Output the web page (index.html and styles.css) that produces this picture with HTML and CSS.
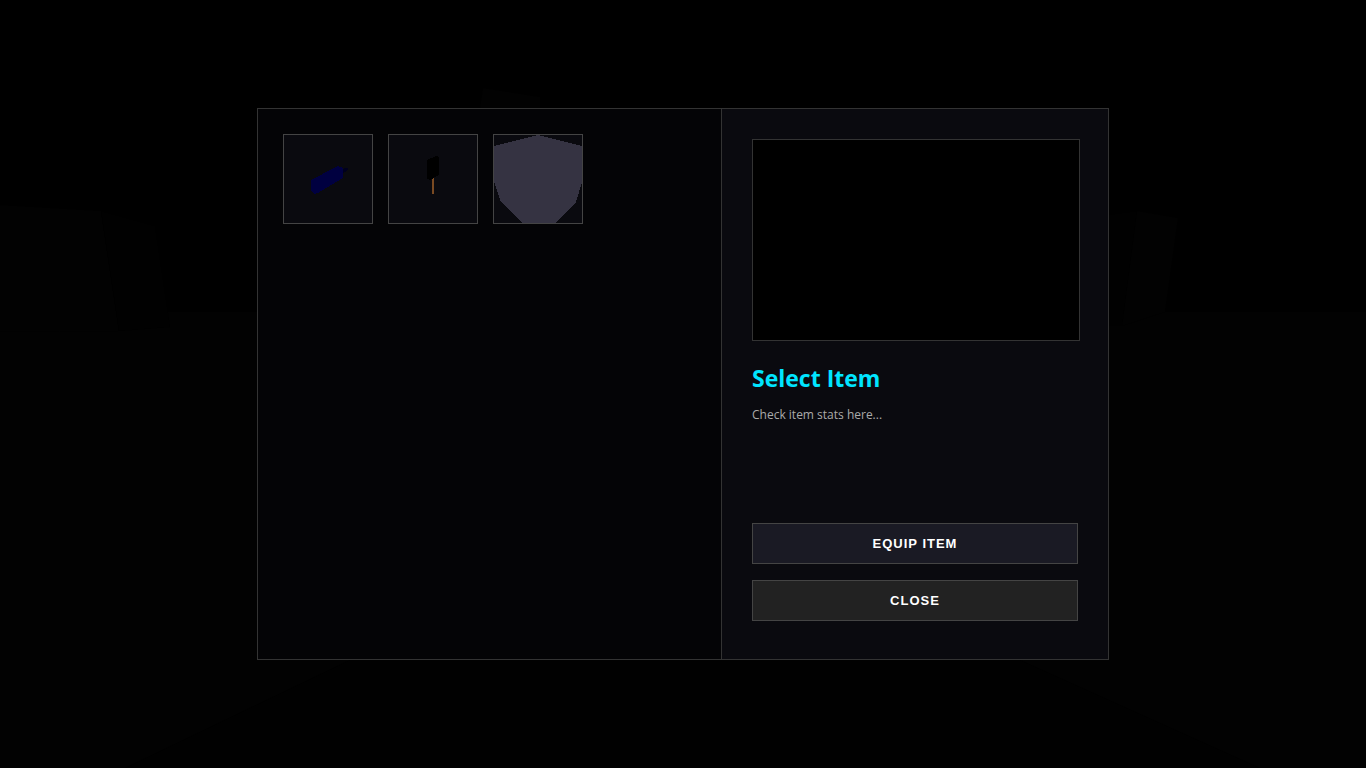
FILE: index.html
```html
<!DOCTYPE html>
<html lang="en">
<head>
    <meta charset="UTF-8">
    <title>Inventory</title>
    <link rel="stylesheet" href="styles.css">
</head>
<body>
<!-- Darkened world behind the menu -->
<svg class="world" viewBox="0 0 1366 768" preserveAspectRatio="xMidYMid slice" aria-hidden="true">
    <rect width="1366" height="768" fill="#000000"/>
    <rect y="312" width="1366" height="456" fill="#020202"/>
    <path d="M350 660 L125 768 H1260 L1020 660 Z" fill="#010101"/>
    <path d="M0 205 L101 211 L119 331 L0 332 Z" fill="#020202"/>
    <path d="M101 211 L155 226 L170 327 L119 331 Z" fill="#010101"/>
    <path d="M1100 216 L1137 211 L1122 326 H1100 Z" fill="#010101"/>
    <path d="M1137 211 L1178 218 L1165 312 L1122 326 Z" fill="#020202"/>
    <path d="M483 88 L540 97 V120 H478 Z" fill="#020202"/>
</svg>

<div id="inventory">
    <!-- Item slots -->
    <div class="item-grid">
        <button class="slot" type="button" aria-label="Blue blade">
            <svg viewBox="0 0 88 88" shape-rendering="crispEdges">
                <path d="M58 34 L61 33 H64 V35 L61 37 L58 38 Z" fill="#00001c"/>
                <path d="M27 45 L52 32 L54 31 L59 33 V43 L34 58 L30 59 L27 55 Z" fill="#000040"/>
            </svg>
        </button>
        <button class="slot" type="button" aria-label="Hammer">
            <svg viewBox="0 0 88 88" shape-rendering="crispEdges">
                <path d="M43 42 H45 V59 H43 Z" fill="#7a4a22"/>
                <path d="M38 25 L47 21 L50 22 V40 L41 45 L38 44 Z" fill="#000000"/>
            </svg>
        </button>
        <button class="slot" type="button" aria-label="Shield">
            <svg viewBox="0 0 88 88" shape-rendering="crispEdges">
                <path d="M44 0 L88 11 V47 L82 67 L61 88 H28 L7 67 L0 47 V11 Z" fill="#353342"/>
            </svg>
        </button>
    </div>

    <!-- Selected item -->
    <div class="item-detail">
        <div class="preview"></div>
        <h2>Select Item</h2>
        <p>Check item stats here...</p>
        <div class="actions">
            <button class="btn" type="button">EQUIP ITEM</button>
            <button class="btn close" type="button">CLOSE</button>
        </div>
    </div>
</div>
</body>
</html>
```
FILE: styles.css
```css
* {
    box-sizing: border-box;
}

body {
    margin: 0;
    min-height: 100vh;
    display: flex;
    align-items: center;
    justify-content: center;
    background: #000;
    color: #fff;
    font-family: "Segoe UI", "Open Sans", sans-serif;
}

.world {
    position: fixed;
    inset: 0;
    width: 100%;
    height: 100%;
    z-index: -1;
}

#inventory {
    width: 100%;
    max-width: 852px;
    min-height: 552px;
    display: grid;
    grid-template-columns: 1fr 387px;
    background: #040406;
    border: 1px solid #333;
}

.item-grid {
    display: flex;
    flex-wrap: wrap;
    align-content: flex-start;
    gap: 15px;
    padding: 25px;
}

.slot {
    width: 90px;
    height: 90px;
    padding: 0;
    background: #0a0a0f;
    border: 1px solid #444;
    cursor: pointer;
}

.slot svg {
    display: block;
    width: 100%;
    height: 100%;
}

.item-detail {
    display: flex;
    flex-direction: column;
    padding: 30px 30px 38px;
    background: #0a0a0f;
    border-left: 1px solid #333;
}

/* The frame sits just outside the text column */
.preview {
    height: 202px;
    margin-right: -2px;
    background: #000;
    border: 1px solid #333;
}

h2 {
    margin: 20px 0 12px;
    color: #00e5ff;
    font-size: 23px;
    line-height: 34px;
}

p {
    margin: 0;
    color: #aaa;
    font-size: 12px;
    line-height: 16px;
}

.actions {
    display: flex;
    flex-direction: column;
    gap: 16px;
    margin-top: auto;
}

.btn {
    padding: 12px;
    background: #1a1a24;
    border: 1px solid #444;
    color: #fff;
    font-family: Arial, "Liberation Sans", sans-serif;
    font-size: 13px;
    font-weight: bold;
    line-height: 15px;
    letter-spacing: 1px;
    cursor: pointer;
}

.btn.close {
    background: #222;
}
```
